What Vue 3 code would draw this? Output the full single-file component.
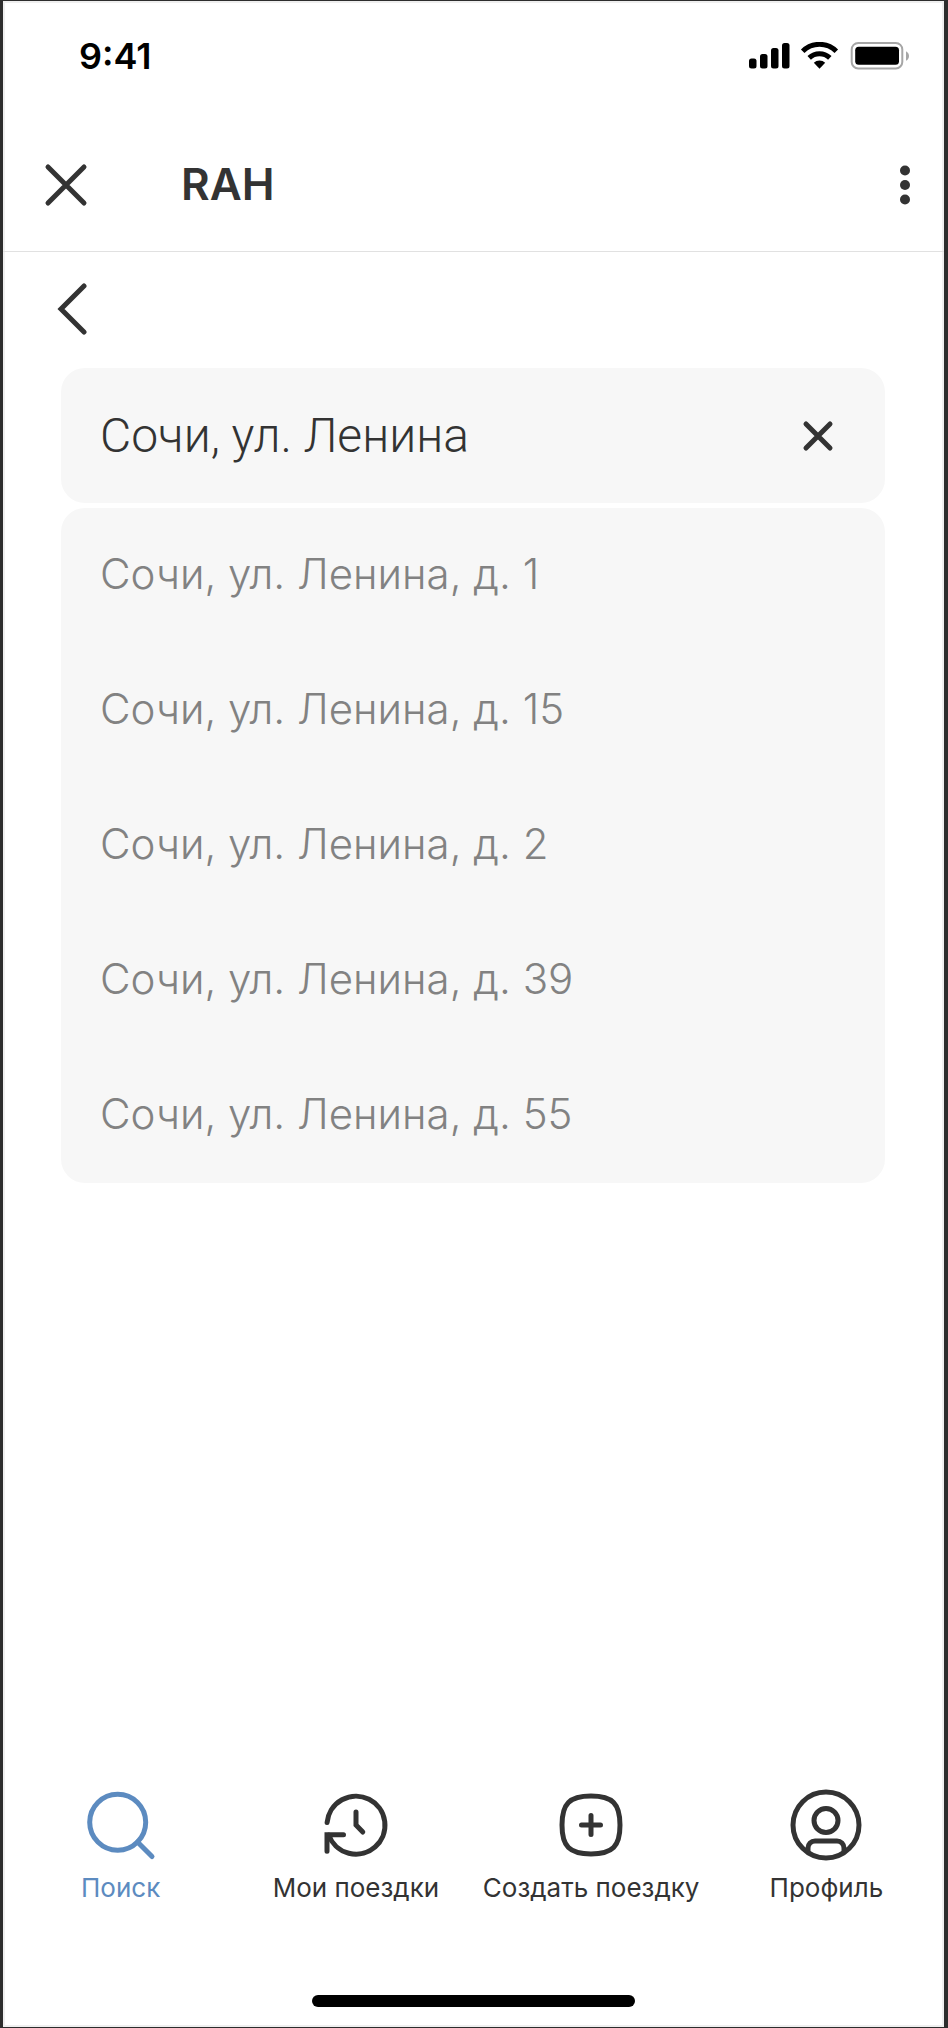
<script setup>
import { ref } from 'vue'

const query = ref('Сочи, ул. Ленина')
const houses = ['1', '15', '2', '39', '55']
const suggestions = houses.map((n) => `Сочи, ул. Ленина, д. ${n}`)
const active = ref('search')
const tabs = [
  { id: 'search', label: 'Поиск' },
  { id: 'trips', label: 'Мои поездки' },
  { id: 'create', label: 'Создать поездку' },
  { id: 'profile', label: 'Профиль' },
]
</script>

<template>
  <div class="phone">
    <div class="status">
      <time class="clock">9:41</time>
      <svg class="status-icons" viewBox="0 0 160 28" aria-hidden="true">
        <rect x="0" y="16.5" width="7.5" height="10" rx="2.5" />
        <rect x="11" y="12" width="7.5" height="14.5" rx="2.5" />
        <rect x="22" y="6" width="7.5" height="20.5" rx="2.5" />
        <rect x="33" y="1" width="7.5" height="25.5" rx="2.5" />
        <g class="line">
          <path d="M53.7 9.2a24 24 0 0 1 33.6 0" />
          <path d="M60.2 15.9a15 15 0 0 1 20.6 0" />
        </g>
        <path d="M64.8 20.8a8.5 8.5 0 0 1 11.4 0l-5.7 5.9z" />
        <rect class="shell" x="102.7" y="1" width="50.6" height="25.4" rx="6.5" />
        <rect x="106.2" y="4.7" width="43.8" height="18" rx="3.5" />
        <path class="nub" d="M157 9.2c4 2 4 7.6 0 9.6z" />
      </svg>
    </div>

    <header class="header">
      <button class="icon-button" type="button" aria-label="Закрыть">
        <svg width="44" height="44" viewBox="0 0 44 44"><path d="M4 4 40 40M40 4 4 40" /></svg>
      </button>
      <h1 class="title">RAH</h1>
      <button class="icon-button" type="button" aria-label="Меню">
        <svg class="dots" width="12" height="44" viewBox="0 0 12 44">
          <circle cx="6" cy="7.5" r="5" /><circle cx="6" cy="22" r="5" /><circle cx="6" cy="36.5" r="5" />
        </svg>
      </button>
    </header>

    <main class="content">
      <button class="icon-button back" type="button" aria-label="Назад">
        <svg width="32" height="52" viewBox="0 0 32 52"><path d="M27 3 4 26 27 49" /></svg>
      </button>
      <form class="field" role="search" @submit.prevent>
        <input v-model="query" class="input" type="text" aria-label="Адрес" autocomplete="off" />
        <button class="icon-button" type="button" aria-label="Очистить" @click="query = ''">
          <svg width="32" height="32" viewBox="0 0 32 32"><path d="M4 4 28 28M28 4 4 28" /></svg>
        </button>
      </form>
      <ul class="suggestions">
        <li v-for="item in suggestions" :key="item">
          <button class="suggestion" type="button" @click="query = item">{{ item }}</button>
        </li>
      </ul>
    </main>

    <nav class="tabs">
      <button
        v-for="tab in tabs"
        :key="tab.id"
        class="tab"
        :class="{ active: tab.id === active }"
        type="button"
        @click="active = tab.id"
      >
        <svg width="72" height="72" viewBox="0 0 72 72" aria-hidden="true">
          <g v-if="tab.id === 'search'">
            <circle cx="32.7" cy="33.3" r="28" />
            <path d="M52.5 53 67 67.5" />
          </g>
          <g v-else-if="tab.id === 'trips'">
            <path d="M7.1 33.5A29 29 0 1 1 8.7 46" />
            <path d="M23.5 45.7H7v16.6" />
            <path d="M36 23v13l6.8 7" />
          </g>
          <g v-else-if="tab.id === 'create'">
            <path d="M36 7C57.5 7 65 14.5 65 36S57.5 65 36 65 7 57.5 7 36 14.5 7 36 7z" />
            <path d="M36 26.5v19M26.5 36h19" />
          </g>
          <g v-else>
            <circle cx="36" cy="36" r="33" />
            <circle cx="36" cy="31.5" r="12" />
            <path d="M18 62.5V59a7 7 0 0 1 7-7h22a7 7 0 0 1 7 7v3.5" />
          </g>
        </svg>
        <span>{{ tab.label }}</span>
      </button>
    </nav>
    <div class="home-indicator"></div>
  </div>
</template>

<style>
body {
  margin: 0;
  background: #fff;
}
</style>

<style scoped>
.phone {
  box-sizing: border-box;
  display: flex;
  flex-direction: column;
  min-height: 100vh;
  border: 1px solid #2d2d2d;
  border-width: 1px 4px 1px 3px;
  background: #fff;
  box-shadow: inset 0 0 0 2px #efefef;
  color: #333;
  font-family: Inter, "Liberation Sans", sans-serif;
}
button,
input {
  padding: 0;
  border: 0;
  background: none;
  color: inherit;
  font: inherit;
}
button {
  cursor: pointer;
}
svg {
  display: block;
  fill: none;
  stroke: currentColor;
  stroke-width: 5;
  stroke-linecap: round;
}
.status {
  display: flex;
  justify-content: space-between;
  align-items: center;
  height: 110px;
  padding: 0 35px 0 76px;
  color: #000;
}
.clock {
  font-size: 36px;
  font-weight: 600;
}
.status-icons {
  width: 160px;
  height: 28px;
  fill: #000;
  stroke: none;
}
.status-icons .line {
  fill: none;
  stroke: #000;
  stroke-width: 5;
  stroke-linecap: butt;
}
.status-icons .shell {
  fill: none;
  stroke: #a6a6a6;
  stroke-width: 2;
}
.status-icons .nub {
  fill: #a6a6a6;
}
.header {
  display: flex;
  align-items: center;
  height: 140px;
  padding: 0 33px 0 41px;
  border-bottom: 1px solid #e1e1e1;
}
.header .icon-button {
  padding-bottom: 8px;
  padding-top: 16px;
}
.title {
  flex: 1;
  margin: 0;
  padding: 6px 0 0 93px;
  font-size: 44px;
  font-weight: 600;
  line-height: 56px;
}
.dots {
  fill: currentColor;
  stroke: none;
}
.content {
  flex: 1;
  padding: 31px 59px 0 58px;
}
.back {
  display: block;
  margin: 0 0 33px -4px;
}
.field {
  display: flex;
  align-items: center;
  height: 135px;
  padding: 0 51px 0 39px;
  border-radius: 24px;
  background: #f7f7f7;
}
.input {
  flex: 1;
  min-width: 0;
  outline: 0;
  font-family: Roboto, Inter, sans-serif;
  font-size: 48px;
  font-weight: 300;
}
.suggestions {
  margin: 5px 0 0;
  padding: 0;
  border-radius: 24px;
  background: #f7f7f7;
  list-style: none;
}
.suggestion {
  display: block;
  width: 100%;
  height: 135px;
  padding: 0 39px 4px;
  color: #828282;
  font-size: 42px;
  font-weight: 300;
  text-align: left;
}
.tabs {
  display: grid;
  grid-template-columns: repeat(4, 1fr);
}
.tab {
  display: flex;
  flex-direction: column;
  align-items: center;
  gap: 11px;
  font-size: 26px;
  line-height: 32px;
  white-space: nowrap;
}
.tab.active {
  color: #5c8bc0;
}
.home-indicator {
  width: 323px;
  height: 12px;
  margin: 91px auto 20px;
  border-radius: 6px;
  background: #000;
}
</style>
